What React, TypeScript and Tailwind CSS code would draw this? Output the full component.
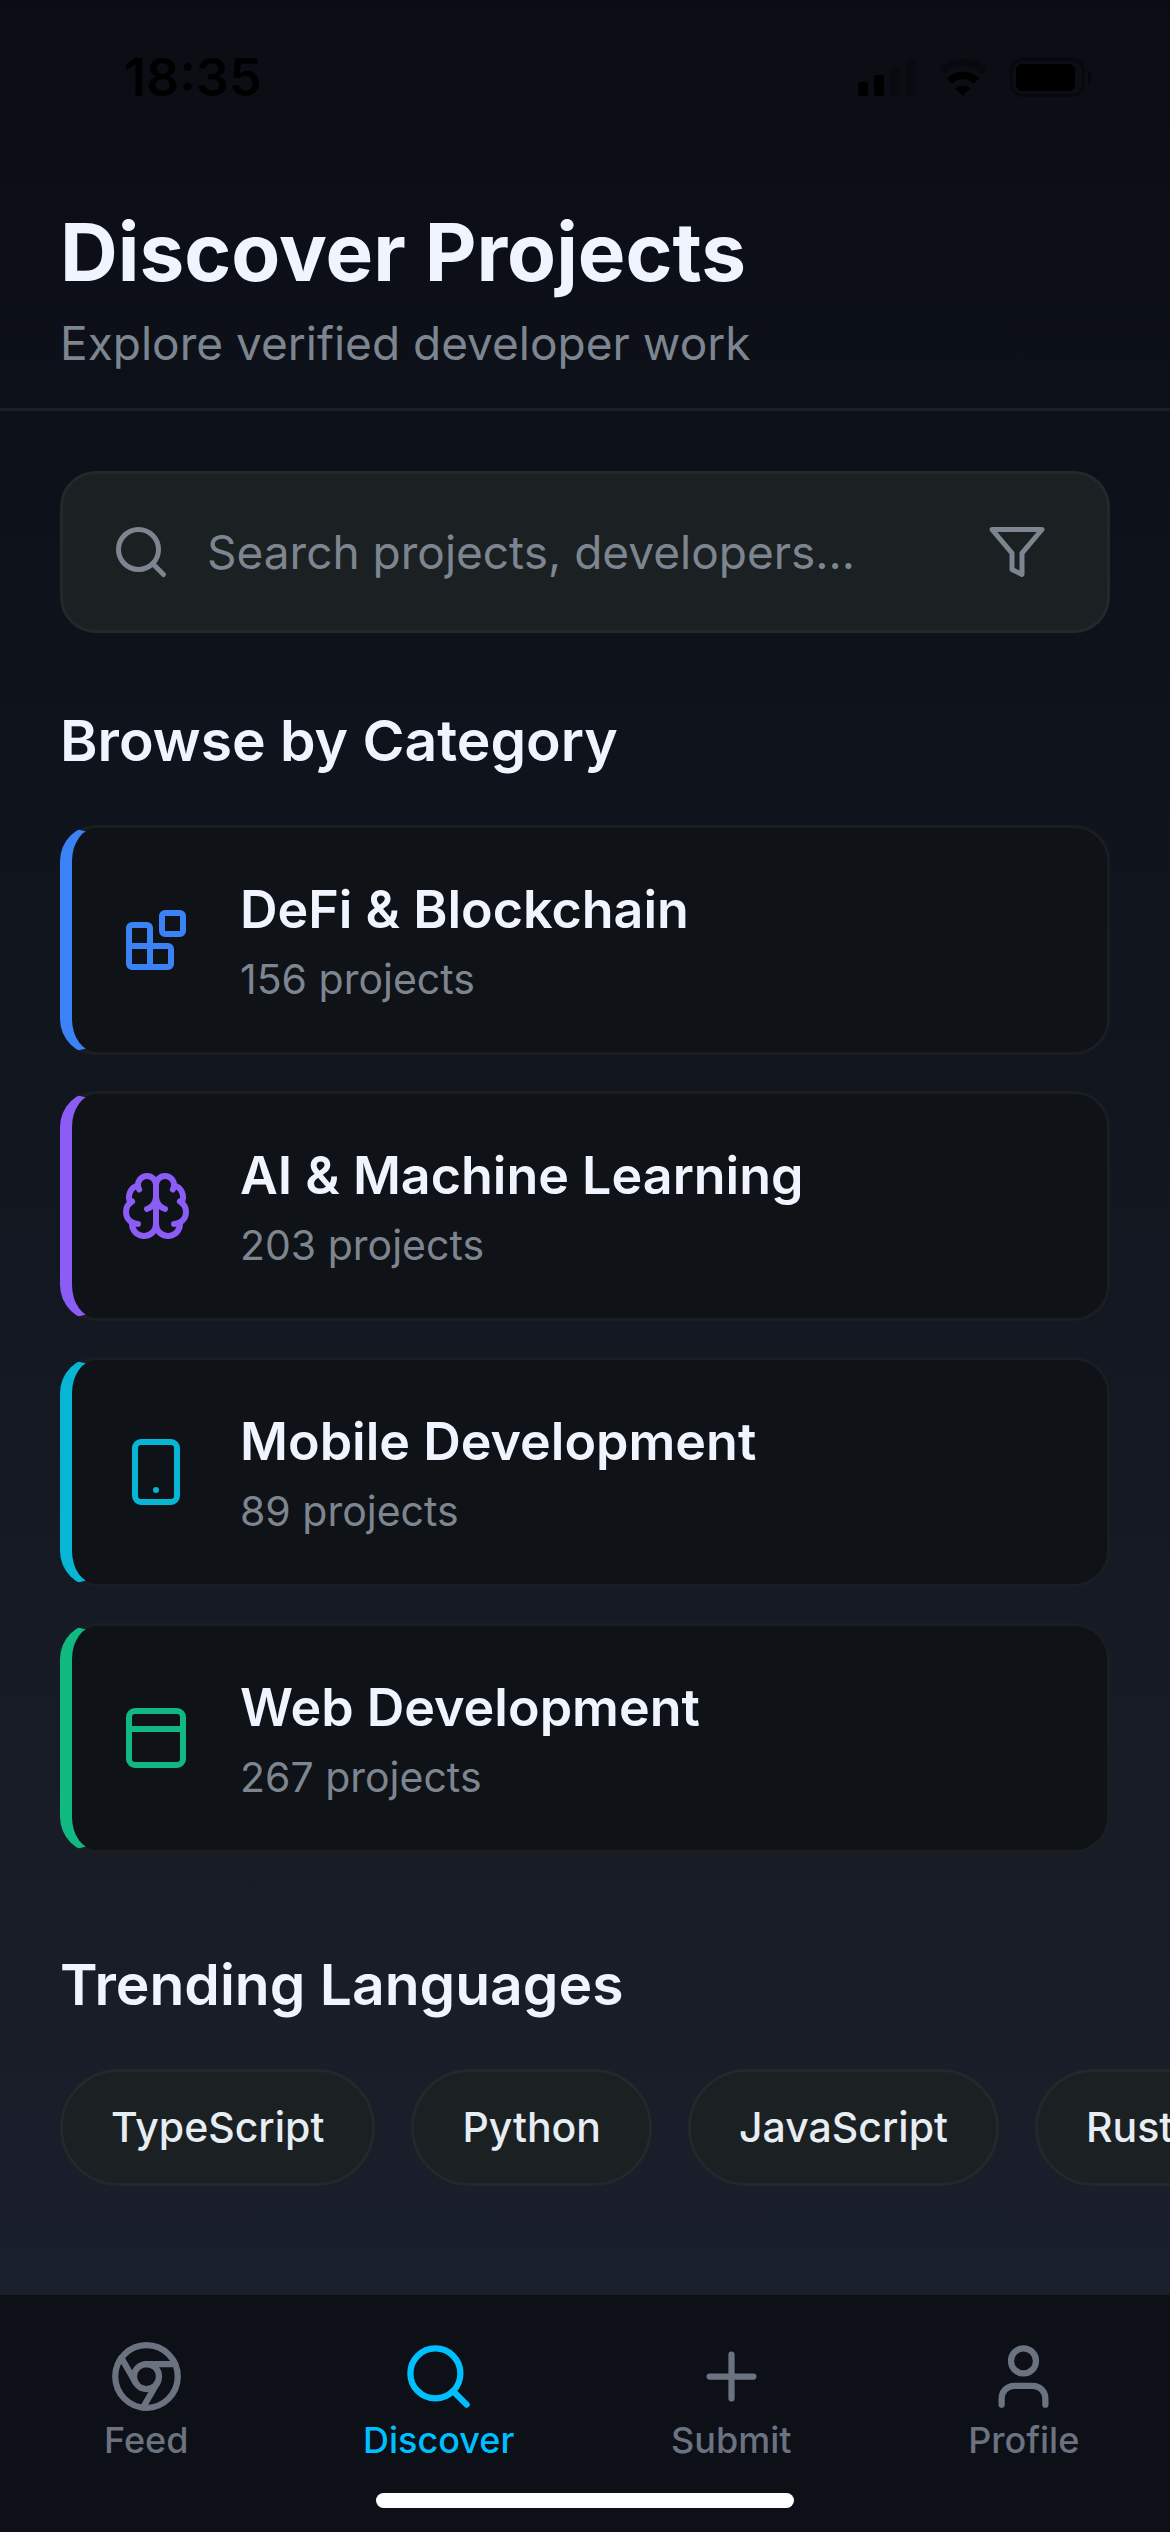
import type { ReactNode } from "react";

type IconProps = { className: string; children: ReactNode };

function Icon({ className, children }: IconProps) {
  return (
    <svg
      viewBox="0 0 24 24"
      fill="none"
      stroke="currentColor"
      strokeWidth="2"
      strokeLinecap="round"
      strokeLinejoin="round"
      aria-hidden="true"
      className={className}
    >
      {children}
    </svg>
  );
}

const searchShape = (
  <>
    <circle cx="11" cy="11" r="8" />
    <path d="m21 21-4.3-4.3" />
  </>
);

const categories = [
  {
    name: "DeFi & Blockchain",
    count: 156,
    edge: "border-l-[#3b82f6]",
    tint: "text-[#3b82f6]",
    shape: (
      <>
        <rect width="7" height="7" x="14" y="3" rx="1" />
        <path d="M10 21V8a1 1 0 0 0-1-1H4a1 1 0 0 0-1 1v12a1 1 0 0 0 1 1h12a1 1 0 0 0 1-1v-5a1 1 0 0 0-1-1H3" />
      </>
    ),
  },
  {
    name: "AI & Machine Learning",
    count: 203,
    edge: "border-l-[#8b5cf6]",
    tint: "text-[#8b5cf6]",
    shape: (
      <>
        <path d="M12 5a3 3 0 1 0-5.997.125 4 4 0 0 0-2.526 5.77 4 4 0 0 0 .556 6.588A4 4 0 1 0 12 18Z" />
        <path d="M12 5a3 3 0 1 1 5.997.125 4 4 0 0 1 2.526 5.77 4 4 0 0 1-.556 6.588A4 4 0 1 1 12 18Z" />
        <path d="M15 13a4.5 4.5 0 0 1-3-4 4.5 4.5 0 0 1-3 4" />
        <path d="M17.599 6.5a3 3 0 0 0 .399-1.375" />
        <path d="M6.003 5.125A3 3 0 0 0 6.401 6.5" />
        <path d="M3.477 10.896a4 4 0 0 1 .585-.396" />
        <path d="M19.938 10.5a4 4 0 0 1 .585.396" />
        <path d="M6 18a4 4 0 0 1-1.967-.516" />
        <path d="M19.967 17.484A4 4 0 0 1 18 18" />
      </>
    ),
  },
  {
    name: "Mobile Development",
    count: 89,
    edge: "border-l-[#06b6d4]",
    tint: "text-[#06b6d4]",
    shape: (
      <>
        <rect width="14" height="20" x="5" y="2" rx="2" />
        <path d="M12 18h.01" />
      </>
    ),
  },
  {
    name: "Web Development",
    count: 267,
    edge: "border-l-[#10b981]",
    tint: "text-[#10b981]",
    shape: (
      <>
        <rect width="18" height="18" x="3" y="3" rx="2" />
        <path d="M3 9h18" />
      </>
    ),
  },
];

const languages = ["TypeScript", "Python", "JavaScript", "Rust"];

const tabs = [
  {
    label: "Feed",
    active: false,
    shape: (
      <>
        <circle cx="12" cy="12" r="10" />
        <circle cx="12" cy="12" r="4" />
        <path d="M21.17 8H12" />
        <path d="M3.95 6.06 8.54 14" />
        <path d="M10.88 21.94 15.46 14" />
      </>
    ),
  },
  { label: "Discover", active: true, shape: searchShape },
  {
    label: "Submit",
    active: false,
    shape: <path d="M5 12h14M12 5v14" />,
  },
  {
    label: "Profile",
    active: false,
    shape: (
      <>
        <path d="M19 21v-2a4 4 0 0 0-4-4H9a4 4 0 0 0-4 4v2" />
        <circle cx="12" cy="7" r="4" />
      </>
    ),
  },
];

function StatusBar() {
  return (
    <div className="flex h-[156px] items-center justify-between pr-[78px] pl-[124px] text-black">
      <time className="text-[52px] font-semibold">18:35</time>
      <div className="flex items-center gap-[22px]">
        <svg viewBox="0 0 58 38" className="h-[38px] w-[58px]" fill="currentColor" aria-hidden="true">
          <rect x="0" y="23" width="10" height="14" rx="3" />
          <rect x="16" y="16" width="10" height="21" rx="3" />
          <rect x="32" y="8" width="10" height="29" rx="3" opacity=".2" />
          <rect x="48" y="0" width="10" height="37" rx="3" opacity=".2" />
        </svg>
        <svg viewBox="0 0 50 38" className="h-[38px] w-[50px]" fill="none" stroke="currentColor" aria-hidden="true">
          <path d="M3 12.500A31 31 0 0 1 47 12.500" strokeWidth="8" opacity=".25" />
          <path d="M11.500 22A19.500 19.500 0 0 1 38.500 22" strokeWidth="7.500" />
          <path d="M25 37 17.500 29.500A11 11 0 0 1 32.500 29.500Z" fill="currentColor" stroke="none" />
        </svg>
        <svg viewBox="0 0 82 40" className="h-[40px] w-[82px]" fill="currentColor" aria-hidden="true">
          <rect x="1.500" y="1.500" width="72" height="36" rx="11" fill="none" stroke="currentColor" strokeWidth="3" opacity=".35" />
          <rect x="6" y="6" width="59" height="27" rx="6" />
          <path d="M78 13c5 3 5 10 0 13Z" opacity=".4" />
        </svg>
      </div>
    </div>
  );
}

export default function App() {
  return (
    <div className="flex min-h-screen flex-col overflow-hidden bg-linear-to-b from-[#0a0d14] to-[#1c222e] font-['Inter',sans-serif] text-[#f0f4ff]">
      <StatusBar />

      <header className="border-b-[3px] border-[#1c2024] px-[60px] pt-[46px] pb-[36px]">
        <h1 className="text-[80px] leading-[100px] font-bold">Discover Projects</h1>
        <p className="mt-[12px] text-[46px] leading-[58px] text-[#7d8590]">Explore verified developer work</p>
      </header>

      <main className="px-[60px] pt-[60px] pb-[106px]">
        <form role="search" className="flex h-[162px] items-center rounded-[36px] border-[3px] border-[#23282b] bg-[#1b2023] pr-[60px] pl-[48px] text-[#7d8590]">
          <Icon className="size-[60px] shrink-0">{searchShape}</Icon>
          <input
            type="text"
            aria-label="Search projects, developers"
            placeholder="Search projects, developers..."
            className="mx-[36px] min-w-0 flex-1 bg-transparent text-[46px] leading-[60px] outline-none placeholder:text-[#7d8590]"
          />
          <button type="button" aria-label="Filter" className="shrink-0">
            <Icon className="size-[60px]">
              <path d="M22 3H2l8 9.460V19l4 2v-8.540L22 3Z" />
            </Icon>
          </button>
        </form>

        <section>
          <h2 className="mt-[72px] mb-[48px] text-[57px] leading-[72px] font-semibold">Browse by Category</h2>
          <div className="flex flex-col gap-[36px]">
            {categories.map((c) => (
              <button
                key={c.name}
                type="button"
                className={`flex h-[230px] items-center gap-[48px] rounded-[36px] border-[3px] border-l-[12px] border-[#1a1e22] bg-[#0f1216] px-[48px] text-left ${c.edge}`}
              >
                <Icon className={`size-[72px] shrink-0 ${c.tint}`}>{c.shape}</Icon>
                <span className="flex flex-col gap-[6px]">
                  <span className="text-[52px] leading-[72px] font-semibold">{c.name}</span>
                  <span className="text-[41px] leading-[54px] text-[#7d8590]">{c.count} projects</span>
                </span>
              </button>
            ))}
          </div>
        </section>

        <section>
          <h2 className="mt-[96px] mb-[48px] text-[57px] leading-[72px] font-semibold">Trending Languages</h2>
          <div className="-mr-[60px] flex gap-[36px] overflow-hidden">
            {languages.map((l) => (
              <button
                key={l}
                type="button"
                className="h-[117px] shrink-0 rounded-full border-[3px] border-[#23282b] bg-[#1b2023] px-[48px] text-[41px] font-medium text-[#e6edf3]"
              >
                {l}
              </button>
            ))}
          </div>
        </section>
      </main>

      <nav className="mt-auto border-t-[3px] border-[#1c2024] bg-[#0d1017] pt-[44px]">
        <div className="grid grid-cols-4">
          {tabs.map((t) => (
            <a
              key={t.label}
              href={`#${t.label.toLowerCase()}`}
              aria-current={t.active ? "page" : undefined}
              className={`flex flex-col items-center gap-[4px] text-[36px] leading-[44px] font-medium ${t.active ? "text-[#00bfff]" : "text-[#6b7280]"}`}
            >
              <Icon className="size-[75px]">{t.shape}</Icon>
              {t.label}
            </a>
          ))}
        </div>
        <div className="mx-auto mt-[31px] mb-[24px] h-[15px] w-[418px] rounded-full bg-white" />
      </nav>
    </div>
  );
}
